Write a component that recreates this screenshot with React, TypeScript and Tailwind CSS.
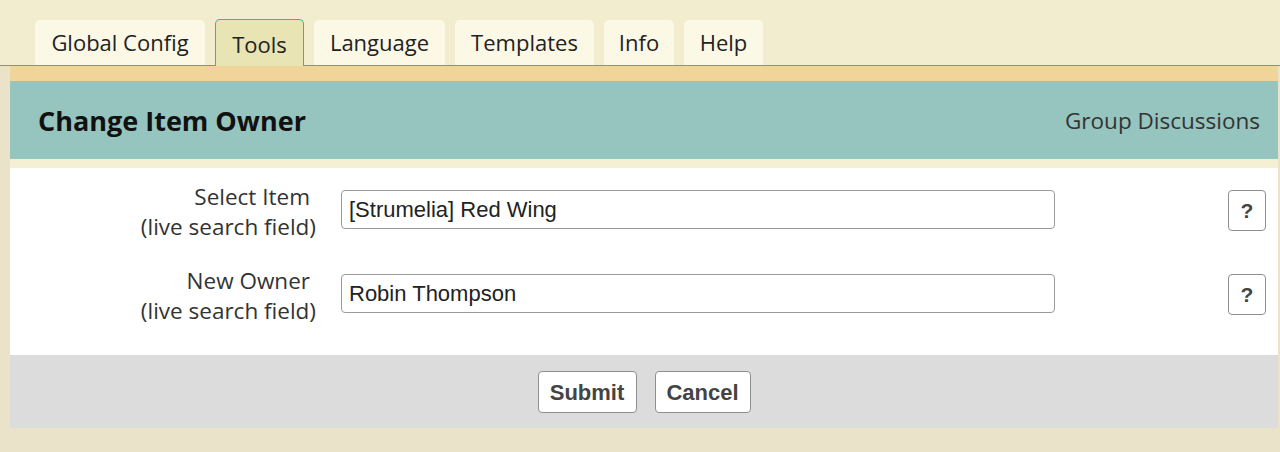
import React from "react";

const tabs = [
  { label: "Global Config", w: "w-[170px]" },
  { label: "Tools", w: "w-[89px]", active: true },
  { label: "Language", w: "w-[131px]" },
  { label: "Templates", w: "w-[139px]" },
  { label: "Info", w: "w-[70px]" },
  { label: "Help", w: "w-[79px]" },
];

function Row({ label, value }: { label: string; value: string }) {
  return (
    <div className="flex items-start">
      <div className="w-[306px] text-right text-[22.5px] leading-[30px] text-[#333]">
        <div className="pr-[6px]">{label}</div>
        <div>(live search field)</div>
      </div>
      <div
        className="ml-[25px] mt-[8px] w-[714px] h-[39px] rounded-[4px] border border-[#9a9a9a] bg-white pl-[7px] flex items-center text-[22px] text-[#222]"
        style={{ fontFamily: '"Liberation Sans", Arial, sans-serif' }}
      >
        {value}
      </div>
      <div className="flex-1" />
      <div
        className="mt-[8px] mr-[12px] w-[38px] h-[41px] rounded-[4px] border border-[#8f8f8f] bg-white flex items-center justify-center text-[21px] font-bold text-[#444]"
        style={{ fontFamily: '"Liberation Sans", Arial, sans-serif' }}
      >
        ?
      </div>
    </div>
  );
}

export default function App() {
  return (
    <div
      className="w-[1280px] h-[452px] bg-[#f3edcf] flex flex-col overflow-hidden"
      style={{ fontFamily: '"Open Sans", sans-serif' }}
    >
      <div className="flex items-end gap-[10px] pl-[35px] pt-[20px] border-b border-[#3fb0b0] h-[66px]">
        {tabs.map((t) =>
          t.active ? (
            <div
              key={t.label}
              className={`${t.w} h-[47px] -mb-px rounded-t-[5px] border border-b-0 border-[#3fb0b0] bg-[#e8e4b3] flex items-center justify-center text-[22px] text-[#222] pt-[2px]`}
            >
              {t.label}
            </div>
          ) : (
            <div
              key={t.label}
              className={`${t.w} h-[45px] rounded-t-[5px] bg-[#fcf8e6] flex items-center justify-center text-[22px] text-[#222]`}
            >
              {t.label}
            </div>
          )
        )}
      </div>
      <div className="flex flex-1 bg-[#ebe3c9]">
        <div className="w-[10px]" />
        <div className="flex-1 flex flex-col">
          <div className="h-[15px] bg-[#f1d49a]" />
          <div className="h-[78px] bg-[#96c4be] flex items-center justify-between pl-[28px] pr-[18px]">
            <div className="text-[27px] font-bold text-[#111] pt-[2px]">Change Item Owner</div>
            <div className="text-[22.5px] text-[#333] pt-[2px]">Group Discussions</div>
          </div>
          <div className="h-[9px] bg-[#f5efd3]" />
          <div className="h-[187px] bg-white pt-[14px] flex flex-col gap-[24px]">
            <Row label="Select Item" value="[Strumelia] Red Wing" />
            <Row label="New Owner" value="Robin Thompson" />
          </div>
          <div
            className="h-[73px] bg-[#dcdcdc] flex items-center justify-center gap-[18px]"
            style={{ fontFamily: '"Liberation Sans", Arial, sans-serif' }}
          >
            <div className="w-[99px] h-[42px] rounded-[4px] border border-[#8f8f8f] bg-white flex items-center justify-center text-[22px] font-bold text-[#444] pt-[1px]">
              Submit
            </div>
            <div className="w-[96px] h-[42px] rounded-[4px] border border-[#8f8f8f] bg-white flex items-center justify-center text-[22px] font-bold text-[#444] pt-[1px]">
              Cancel
            </div>
          </div>
          <div className="flex-1" />
        </div>
        <div className="w-[2px]" />
      </div>
    </div>
  );
}
